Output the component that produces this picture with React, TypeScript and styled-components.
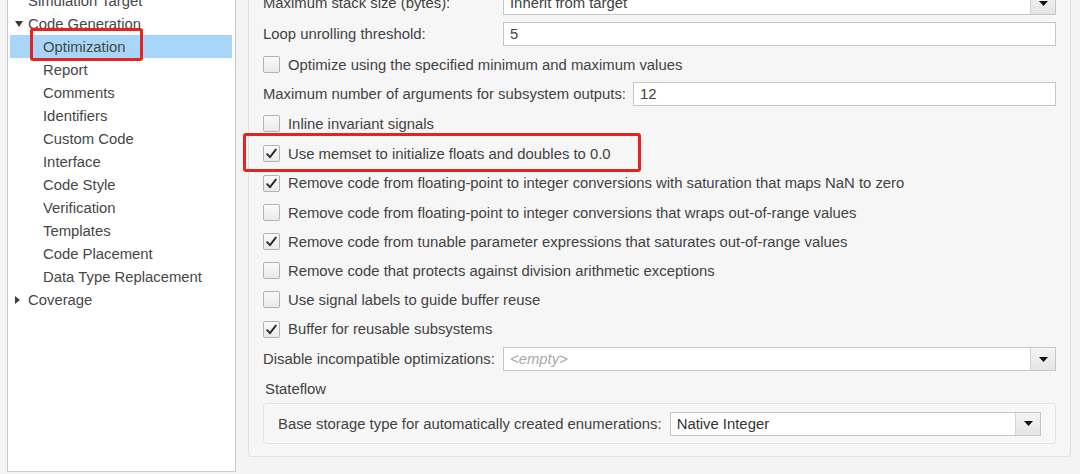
import React from 'react';
import styled, { createGlobalStyle } from 'styled-components';

const Global = createGlobalStyle`
  html, body { margin: 0; padding: 0; background: #f4f4f4; }
  body {
    font-family: "Liberation Sans", Arial, Helvetica, sans-serif;
    font-size: 14.85px;
    color: #424242;
  }
`;

const Page = styled.div`
  display: flex;
  align-items: flex-start;
  width: 1080px;
  height: 474px;
  overflow: hidden;
  background: #f4f4f4;
`;

const TreePanel = styled.div`
  margin: -15px 0 0 7px;
  width: 229px;
  height: 487px;
  flex: none;
  box-sizing: border-box;
  border: 1px solid #c9c9c9;
  background: #ffffff;
  padding: 3px 3px 0 2px;
`;

const TreeRow = styled.div<{ $indent: number; $selected?: boolean }>`
  position: relative;
  display: flex;
  align-items: center;
  height: 23px;
  padding-left: ${(p) => p.$indent}px;
  background: ${(p) => (p.$selected ? '#a9d6f8' : 'transparent')};
  color: #464646;
  white-space: nowrap;
`;

const Twisty = styled.span`
  display: inline-flex;
  width: 13px;
  align-items: center;
  color: #3c3c3c;
`;

const Callout = styled.div<{ $l: number; $t: number; $w: number; $h: number }>`
  position: absolute;
  left: ${(p) => p.$l}px;
  top: ${(p) => p.$t}px;
  width: ${(p) => p.$w}px;
  height: ${(p) => p.$h}px;
  box-sizing: border-box;
  border: 3px solid #e6241f;
  border-radius: 3px;
  pointer-events: none;
`;

const SettingsPanel = styled.div`
  margin: -20px 0 0 12px;
  width: 823px;
  flex: none;
  box-sizing: border-box;
  border: 1px solid #e0e0e0;
  border-radius: 4px;
  background: #f6f6f6;
  padding: 7px 14px 12px 14px;
  display: flex;
  flex-direction: column;
`;

const Row = styled.div<{ $h: number }>`
  position: relative;
  display: flex;
  align-items: center;
  height: ${(p) => p.$h}px;
  white-space: nowrap;
`;

const FixedLabel = styled.span`
  width: 240px;
  flex: none;
`;

const AutoLabel = styled.span`
  flex: none;
  margin-right: 7px;
`;

const TextBox = styled.div<{ $placeholder?: boolean; $dark?: boolean }>`
  flex: 1;
  display: flex;
  align-items: center;
  height: 24px;
  box-sizing: border-box;
  border: 1px solid #c6c6c6;
  background: #ffffff;
  padding-left: 6px;
  color: ${(p) => (p.$placeholder ? '#a8a8a8' : p.$dark ? '#333333' : '#424242')};
  font-style: ${(p) => (p.$placeholder ? 'italic' : 'normal')};
`;

const BoxText = styled.span`
  flex: 1;
`;

const DropButton = styled.span`
  width: 24px;
  align-self: stretch;
  display: flex;
  align-items: center;
  justify-content: center;
  border-left: 1px solid #d2d2d2;
  background: linear-gradient(#f5f5f5, #e4e4e4);
`;

const CheckBox = styled.span`
  width: 17px;
  height: 17px;
  flex: none;
  box-sizing: border-box;
  border: 1px solid #b3b3b3;
  border-radius: 2px;
  background: linear-gradient(#fafafa, #e9e9e9);
  display: flex;
  align-items: center;
  justify-content: center;
  margin-right: 8px;
`;

const SectionLabel = styled.div`
  display: flex;
  align-items: center;
  height: 29px;
  padding-left: 2px;
`;

const Group = styled.div`
  display: flex;
  align-items: center;
  height: 41px;
  box-sizing: border-box;
  border: 1px solid #e2e2e2;
  border-radius: 4px;
  background: #f7f7f7;
  padding: 0 14px 0 14px;
  white-space: nowrap;
`;

const GroupLabel = styled.span`
  flex: none;
  margin-right: 8px;
`;

const DownTri = () => (
  <svg width="8" height="6" viewBox="0 0 8 6">
    <path d="M0 0 L8 0 L4 6 Z" fill="currentColor" />
  </svg>
);

const RightTri = () => (
  <svg width="6" height="8" viewBox="0 0 6 8">
    <path d="M0 0 L5 4 L0 8 Z" fill="currentColor" />
  </svg>
);

const Arrow = () => (
  <svg width="9" height="5" viewBox="0 0 9 5">
    <path d="M0 0 L9 0 L4.5 5 Z" fill="#111" />
  </svg>
);

const Tick = () => (
  <svg width="13" height="13" viewBox="0 0 13 13">
    <path d="M2.2 7.2 L5 10.2 L10.8 2.6" fill="none" stroke="#2a2a2a" strokeWidth="1.9" strokeLinecap="round" strokeLinejoin="round" />
  </svg>
);

const Combo: React.FC<{ text: string; placeholder?: boolean; dark?: boolean }> = ({ text, placeholder, dark }) => (
  <TextBox $placeholder={placeholder} $dark={dark}>
    <BoxText>{text}</BoxText>
    <DropButton>
      <Arrow />
    </DropButton>
  </TextBox>
);

const Check: React.FC<{ checked?: boolean; label: string; h: number; callout?: boolean }> = ({ checked, label, h, callout }) => (
  <Row $h={h}>
    <CheckBox>{checked && <Tick />}</CheckBox>
    <span>{label}</span>
    {callout && <Callout $l={-20} $t={-6} $w={398} $h={39} />}
  </Row>
);

type TreeItem = { label: string; indent: number; twisty?: 'down' | 'right'; selected?: boolean };

const treeItems: TreeItem[] = [
  { label: 'Simulation Target', indent: 18 },
  { label: 'Code Generation', indent: 5, twisty: 'down' },
  { label: 'Optimization', indent: 33, selected: true },
  { label: 'Report', indent: 33 },
  { label: 'Comments', indent: 33 },
  { label: 'Identifiers', indent: 33 },
  { label: 'Custom Code', indent: 33 },
  { label: 'Interface', indent: 33 },
  { label: 'Code Style', indent: 33 },
  { label: 'Verification', indent: 33 },
  { label: 'Templates', indent: 33 },
  { label: 'Code Placement', indent: 33 },
  { label: 'Data Type Replacement', indent: 33 },
  { label: 'Coverage', indent: 5, twisty: 'right' },
];

export default function App() {
  return (
    <>
      <Global />
      <Page>
        <TreePanel>
          {treeItems.map((it, i) => (
            <TreeRow key={i} $indent={it.indent} $selected={it.selected}>
              {it.twisty && <Twisty>{it.twisty === 'down' ? <DownTri /> : <RightTri />}</Twisty>}
              <span>{it.label}</span>
              {it.selected && <Callout $l={20} $t={-7} $w={113} $h={33} />}
            </TreeRow>
          ))}
        </TreePanel>

        <SettingsPanel>
          <Row $h={30}>
            <FixedLabel>Maximum stack size (bytes):</FixedLabel>
            <Combo text="Inherit from target" />
          </Row>
          <Row $h={32}>
            <FixedLabel>Loop unrolling threshold:</FixedLabel>
            <TextBox>5</TextBox>
          </Row>
          <Check h={29} label="Optimize using the specified minimum and maximum values" />
          <Row $h={29}>
            <AutoLabel>Maximum number of arguments for subsystem outputs:</AutoLabel>
            <TextBox>12</TextBox>
          </Row>
          <Check h={31} label="Inline invariant signals" />
          <Check h={29} checked callout label="Use memset to initialize floats and doubles to 0.0" />
          <Check h={30} checked label="Remove code from floating-point to integer conversions with saturation that maps NaN to zero" />
          <Check h={29} label="Remove code from floating-point to integer conversions that wraps out-of-range values" />
          <Check h={29} checked label="Remove code from tunable parameter expressions that saturates out-of-range values" />
          <Check h={29} label="Remove code that protects against division arithmetic exceptions" />
          <Check h={29} label="Use signal labels to guide buffer reuse" />
          <Check h={30} checked label="Buffer for reusable subsystems" />
          <Row $h={30}>
            <FixedLabel>Disable incompatible optimizations:</FixedLabel>
            <Combo text="<empty>" placeholder />
          </Row>
          <SectionLabel>Stateflow</SectionLabel>
          <Group>
            <GroupLabel>Base storage type for automatically created enumerations:</GroupLabel>
            <Combo text="Native Integer" dark />
          </Group>
        </SettingsPanel>
      </Page>
    </>
  );
}
